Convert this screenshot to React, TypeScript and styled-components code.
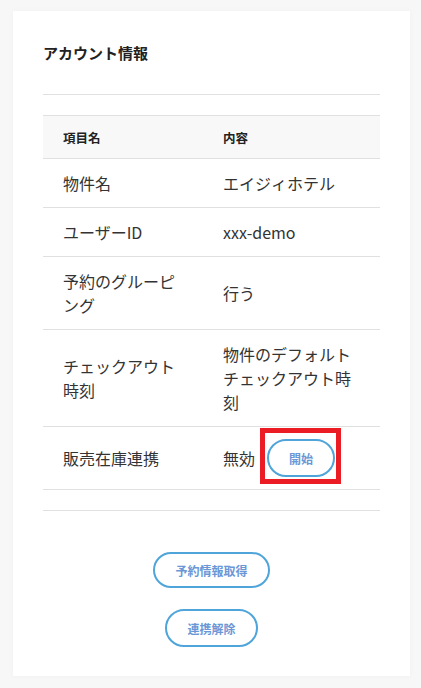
import * as React from 'react';
import styled, { createGlobalStyle } from 'styled-components';

const GlobalStyle = createGlobalStyle`
  body {
    margin: 0;
    background: #f7f7f7;
    font-family: "Noto Sans CJK JP", "Noto Sans", sans-serif;
    color: #333;
  }
`;

const Page = styled.div`
  padding: 11px 11px 12px 13px;
`;

const Card = styled.div`
  background: #fff;
  padding: 30px 30px 29px;
  box-shadow: 0 0 6px rgba(0, 0, 0, 0.03);
`;

const Title = styled.h2`
  margin: 0;
  padding: 1px 0 30px;
  font-size: 15px;
  font-weight: 700;
  line-height: 22px;
  color: #222;
  border-bottom: 1px solid #e0e0e0;
`;

const Table = styled.table`
  width: 100%;
  margin-top: 20px;
  border-collapse: collapse;
  border-top: 1px solid #e0e0e0;
  border-bottom: 1px solid #e0e0e0;
`;

const HeadCell = styled.th<{ $w?: number }>`
  background: #f8f8f8;
  text-align: left;
  font-size: 12.5px;
  font-weight: 700;
  height: 43px;
  padding: 0 20px;
  color: #222;
  width: ${(p) => (p.$w ? `${p.$w}px` : 'auto')};
  box-sizing: border-box;
`;

const Row = styled.tr`
  border-top: 1px solid #e0e0e0;
`;

const Cell = styled.td`
  font-size: 16px;
  line-height: 24px;
  padding: 12px 20px;
  vertical-align: middle;
  color: #333;
`;

const Inline = styled.div`
  display: flex;
  align-items: center;
  gap: 12px;
`;

const Mark = styled.span`
  position: relative;
  display: inline-flex;
  &::after {
    content: '';
    position: absolute;
    left: -7px;
    right: -6px;
    top: -11px;
    bottom: -7px;
    border: 5px solid #ec1c24;
    pointer-events: none;
  }
`;

const PillButton = styled.button<{ $h?: number }>`
  height: ${(p) => p.$h ?? 36}px;
  padding: 0 20px;
  border: 2px solid #4fa4da;
  border-radius: 999px;
  background: #fff;
  color: #6b97d6;
  font-family: "Noto Sans CJK JP", "Noto Sans", sans-serif;
  font-size: 12px;
  font-weight: 700;
  cursor: pointer;
`;

const Divider = styled.div`
  height: 20px;
  border-bottom: 1px solid #e0e0e0;
`;

const Actions = styled.div`
  display: flex;
  flex-direction: column;
  align-items: center;
  gap: 21px;
  padding-top: 41px;
`;

const rows: [string, string][] = [
  ['物件名', 'エイジィホテル'],
  ['ユーザーID', 'xxx-demo'],
  ['予約のグルーピング', '行う'],
  ['チェックアウト時刻', '物件のデフォルトチェックアウト時刻'],
];

export default function App() {
  return (
    <>
      <GlobalStyle />
      <Page>
        <Card>
          <Title>アカウント情報</Title>
          <Table>
            <thead>
              <tr>
                <HeadCell $w={160}>項目名</HeadCell>
                <HeadCell>内容</HeadCell>
              </tr>
            </thead>
            <tbody>
              {rows.map(([k, v]) => (
                <Row key={k}>
                  <Cell>{k}</Cell>
                  <Cell>{v}</Cell>
                </Row>
              ))}
              <Row>
                <Cell>販売在庫連携</Cell>
                <Cell>
                  <Inline>
                    無効
                    <Mark>
                      <PillButton $h={38}>開始</PillButton>
                    </Mark>
                  </Inline>
                </Cell>
              </Row>
            </tbody>
          </Table>
          <Divider />
          <Actions>
            <PillButton>予約情報取得</PillButton>
            <PillButton $h={38}>連携解除</PillButton>
          </Actions>
        </Card>
      </Page>
    </>
  );
}
